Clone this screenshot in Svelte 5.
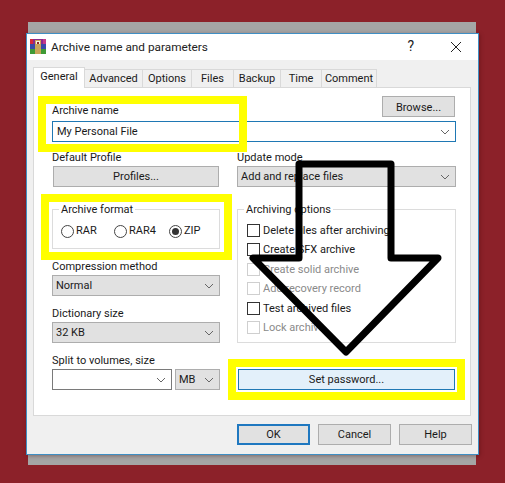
<script>
  const tabs = ['General', 'Advanced', 'Options', 'Files', 'Backup', 'Time', 'Comment'];
  const formats = [
    { label: 'RAR', checked: false },
    { label: 'RAR4', checked: false },
    { label: 'ZIP', checked: true }
  ];
  const options = [
    { label: 'Delete files after archiving', disabled: false },
    { label: 'Create SFX archive', disabled: false },
    { label: 'Create solid archive', disabled: true },
    { label: 'Add recovery record', disabled: true },
    { label: 'Test archived files', disabled: false },
    { label: 'Lock archive', disabled: true }
  ];
</script>

{#snippet chevron()}
  <svg class="chev" width="10" height="6" viewBox="0 0 10 6"><path d="M1 1l4 4 4-4" fill="none" stroke="#666" stroke-width="1"/></svg>
{/snippet}

<div class="stage">
  <div class="backdrop"></div>
  <div class="window">
    <header class="titlebar">
      <svg class="logo" width="16" height="16" viewBox="0 0 16 16" shape-rendering="crispEdges">
        <rect x="0" y="0" width="16" height="5" fill="#8a2a8c"/>
        <rect x="0" y="5" width="16" height="5" fill="#3a4aa8"/>
        <rect x="0" y="10" width="16" height="5" fill="#3f9a35"/>
        <rect x="0" y="0" width="3" height="5" fill="#d8283a"/>
        <rect x="13" y="0" width="3" height="5" fill="#c23a8a"/>
        <rect x="5" y="1" width="6" height="14" fill="#c9a45a"/>
        <rect x="6" y="2" width="4" height="3" fill="#f6f0e2"/>
        <rect x="7" y="3" width="2" height="2" fill="#8a2a2a"/>
      </svg>
      <span class="title">Archive name and parameters</span>
      <span class="help">?</span>
      <svg class="close" width="12" height="12" viewBox="0 0 12 12"><path d="M1 1l10 10M11 1L1 11" stroke="#222" stroke-width="1" fill="none"/></svg>
    </header>

    <div class="body">
      <nav class="tabs">
        {#each tabs as tab, i}
          <span class="tab t{i}" class:active={i === 0}>{tab}</span>
        {/each}
      </nav>

      <section class="page">
        <div class="name-head">
          <span class="label">Archive name</span>
          <button class="btn browse">Browse...</button>
        </div>
        <div class="combo edit focus"><span>My Personal File</span>{@render chevron()}</div>

        <div class="columns">
          <div class="col left">
            <span class="label">Default Profile</span>
            <button class="btn profiles">Profiles...</button>

            <fieldset class="group fmt">
              <legend>Archive format</legend>
              <div class="radios">
                {#each formats as f}
                  <span class="radio r-{f.label}"><i class:on={f.checked}></i>{f.label}</span>
                {/each}
              </div>
            </fieldset>

            <span class="label comp">Compression method</span>
            <div class="combo"><span>Normal</span>{@render chevron()}</div>

            <span class="label dict">Dictionary size</span>
            <div class="combo"><span>32 KB</span>{@render chevron()}</div>

            <span class="label split">Split to volumes, size</span>
            <div class="split-row">
              <div class="combo edit vol">{@render chevron()}</div>
              <div class="combo unit"><span>MB</span>{@render chevron()}</div>
            </div>
          </div>

          <div class="col right">
            <span class="label">Update mode</span>
            <div class="combo update"><span>Add and replace files</span>{@render chevron()}</div>

            <fieldset class="group opts">
              <legend>Archiving options</legend>
              {#each options as o}
                <span class="check" class:disabled={o.disabled}><i></i>{o.label}</span>
              {/each}
            </fieldset>

            <button class="btn pass">Set password...</button>
          </div>
        </div>
      </section>

      <footer class="actions">
        <button class="btn foot ok">OK</button>
        <button class="btn foot">Cancel</button>
        <button class="btn foot">Help</button>
      </footer>
    </div>
  </div>

  <div class="mark m1"></div>
  <div class="mark m2"></div>
  <div class="mark m3"></div>
  <svg class="arrow" width="505" height="483" viewBox="0 0 505 483">
    <path d="M299 164H391V258H438L346 352L253 258H299Z" fill="none" stroke="#000" stroke-width="7" stroke-linejoin="round"/>
  </svg>
</div>

<style>
  :global(body) { margin: 0; background: #8c2129; }
  .stage {
    position: relative;
    width: 505px;
    height: 483px;
    overflow: hidden;
    padding: 33px 0 0 26px;
    box-sizing: border-box;
    background: #8c2129;
    font-family: Roboto, "Open Sans", sans-serif;
    font-size: 11px;
    color: #1a1a1a;
  }
  .backdrop {
    position: absolute;
    left: 28px; top: 22px;
    width: 448px; height: 443px;
    background: #a5a5a5;
  }
  .window {
    position: relative;
    width: 453px;
    height: 422px;
    box-sizing: border-box;
    border: 1px solid #3f8fc4;
    background: #f0f0f0;
    box-shadow: 1px 1px 4px rgba(60, 0, 0, .35);
    display: flex;
    flex-direction: column;
  }
  .titlebar {
    height: 26px;
    flex: none;
    background: #fff;
    display: flex;
    align-items: center;
    padding-left: 3px;
  }
  .logo { flex: none; margin-top: -1px; }
  .title { margin-left: 5px; font-size: 11.8px; color: #222; margin-top: -1px; }
  .help { margin-left: auto; font-size: 14px; color: #222; margin-top: -2px; }
  .close { margin: 0 16px 0 36px; }
  .body { flex: 1; display: flex; flex-direction: column; padding: 7px 7px 0 6px; min-height: 0; }
  .tabs { display: flex; height: 20px; align-items: flex-end; position: relative; z-index: 1; }
  .tab {
    height: 18px;
    box-sizing: border-box;
    display: flex;
    align-items: center;
    justify-content: center;
    border: 1px solid #d9d9d9;
    border-left: 0;
    border-bottom: 0;
    background: #f0f0f0;
  }
  .t0 { width: 52px; } .t1 { width: 58px; } .t2 { width: 49px; } .t3 { width: 42px; }
  .t4 { width: 47px; } .t5 { width: 41px; } .t6 { width: 55px; }
  .tab.active {
    height: 21px;
    margin-bottom: -1px;
    background: #fff;
    border-left: 1px solid #d9d9d9;
    padding: 0 0 4px;
  }
  .page {
    height: 329px;
    flex: none;
    box-sizing: border-box;
    background: #fff;
    border: 1px solid #d9d9d9;
    padding: 8px 14px 0 18px;
  }
  .label { display: block; line-height: 14px; }
  .btn {
    font: inherit;
    color: inherit;
    background: #e1e1e1;
    border: 1px solid #adadad;
    padding: 0;
    height: 21px;
    display: block;
    box-sizing: border-box;
  }
  .name-head { display: flex; justify-content: space-between; align-items: flex-start; height: 25px; }
  .name-head .label { margin-top: 8px; }
  .browse { width: 73px; margin: 0 1px 0 0; padding-top: 1px; }
  .combo {
    height: 21px;
    box-sizing: border-box;
    background: #e1e1e1;
    border: 1px solid #adadad;
    display: flex;
    align-items: center;
    justify-content: space-between;
    padding: 0 4px 0 3px;
  }
  .combo.edit { background: #fff; border-color: #7a7a7a; }
  .combo.focus { border-color: #1f78b4; padding-left: 4px; }
  .combo.vol { justify-content: flex-end; width: 120px; }
  .chev { flex: none; margin-right: 1px; }
  .columns { display: grid; grid-template-columns: 168px 219px; column-gap: 17px; margin-top: 9px; }
  .col { display: flex; flex-direction: column; }
  .col > .label { height: 15px; }
  .profiles { margin: 0 1px; }
  .group {
    margin: 0;
    padding: 0;
    border: 1px solid #dcdcdc;
    min-width: 0;
    box-sizing: border-box;
  }
  legend { margin-left: 6px; padding: 1px 2px 0; line-height: 13px; }
  .fmt { height: 47px; margin-top: 15px; }
  .radios { display: flex; padding: 8px 0 0 8px; }
  .radio { display: flex; align-items: center; gap: 2px; line-height: 14px; }
  .r-RAR { width: 53px; } .r-RAR4 { width: 55px; }
  .radio i {
    width: 13px; height: 13px; box-sizing: border-box;
    border: 1px solid #444; border-radius: 50%; background: #fff;
    display: block; position: relative; flex: none;
  }
  .radio i.on::after {
    content: ""; position: absolute; inset: 2px; border-radius: 50%; background: #333;
  }
  .comp { margin-top: 11px; }
  .dict { margin-top: 11px; }
  .split { margin-top: 11px; }
  .split-row { display: flex; gap: 3px; }
  .unit { flex: 1; }
  .opts {
    height: 141px;
    margin-top: 15px;
    padding-top: 4.5px;
    display: flex;
    flex-direction: column;
  }
  .check { display: flex; align-items: center; gap: 3px; height: 19.5px; flex: none; margin-left: 9px; }
  .check i {
    width: 13px; height: 13px; box-sizing: border-box; border: 1px solid #333; background: #fff; flex: none; display: block;
  }
  .check.disabled { color: #8a8a8a; }
  .check.disabled i { border-color: #cfcfcf; }
  .pass {
    margin: auto 1px 0;
    background: #e3f0fa;
    border-color: #1f78b4;
    height: 21px;
  }
  .actions { display: flex; justify-content: flex-end; gap: 8px; margin: 8px -1px 0 0; }
  .foot { width: 73px; height: 21px; }
  .ok { border: 2px solid #1f78c0; }
  .mark { position: absolute; box-sizing: border-box; border: 8px solid #ffff00; }
  .m1 { left: 38px; top: 96px; width: 209px; height: 56px; }
  .m2 { left: 41px; top: 194px; width: 191px; height: 66px; }
  .m3 { left: 228px; top: 359px; width: 237px; height: 41px; }
  .arrow { position: absolute; left: 0; top: 0; pointer-events: none; }
</style>
